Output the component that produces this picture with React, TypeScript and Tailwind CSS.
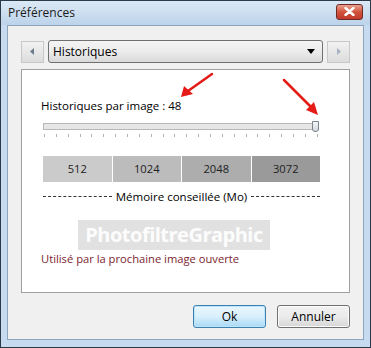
import React from 'react'

const font = {fontFamily: '"Open Sans", "Noto Sans", sans-serif'}

const ticks = Array.from({length: 24}, (_, i) => i)

const sizes = [
	{label: '512', bg: 'bg-[#cbcbcb]'},
	{label: '1024', bg: 'bg-[#bcbcbc]'},
	{label: '2048', bg: 'bg-[#adadad]'},
	{label: '3072', bg: 'bg-[#9a9a9a]'},
]

const ArrowBtn = ({dir}: {dir: 'left' | 'right'}) => (
	<div className='w-[23px] h-[22px] flex items-center justify-center border border-[#c8c8c8] bg-gradient-to-b from-[#f2f2f2] to-[#dcdcdc]'>
		<svg width='5' height='7' viewBox='0 0 5 7'>
			{dir === 'left' ? (
				<polygon points='4,0 4,7 0,3.5' fill='#6c7a8c' />
			) : (
				<polygon points='1,0 1,7 5,3.5' fill='#a8b4c4' />
			)}
		</svg>
	</div>
)

export default function App() {
	return (
		<div
			className='relative w-[371px] h-[348px] bg-[#c6dbef] border border-[#2c3a48] overflow-hidden text-[11.2px] text-black'
			style={font}
		>
			{/* title bar */}
			<div className='h-[24px] flex items-center justify-between pl-[7px] pr-[7px] bg-gradient-to-b from-[#dce9f5] to-[#bcd3ea]'>
				<span className='text-[12px] text-[#1a1a1a]'>Préférences</span>
				<div className='w-[27px] h-[16px] mt-[-3px] rounded-[3px] border border-[#6d2a26] bg-gradient-to-b from-[#e9a08f] via-[#d2533c] to-[#c0392b] flex items-center justify-center'>
					<svg width='11' height='9' viewBox='0 0 11 9'>
						<path d='M1.5 1 L9.5 8 M9.5 1 L1.5 8' stroke='#fff' strokeWidth='2.4' strokeLinecap='round' />
					</svg>
				</div>
			</div>

			{/* client area */}
			<div className='mx-[6px] h-[315px] border border-[#8ea4bb] bg-[#f0f0f0] flex flex-col px-[13px] pt-[14px]'>
				<div className='flex items-center gap-[4px] h-[23px]'>
					<ArrowBtn dir='left' />
					<div className='flex-1 h-[23px] rounded-[3px] border border-[#707070] bg-gradient-to-b from-[#f4f4f4] via-[#ececec] to-[#d9d9d9] flex items-center justify-between pl-[4px] pr-[7px]'>
						<span className='text-[12px]'>Historiques</span>
						<svg width='8' height='5' viewBox='0 0 8 5'>
							<polygon points='0,0 8,0 4,5' fill='#000' />
						</svg>
					</div>
					<ArrowBtn dir='right' />
				</div>

				<div className='relative mt-[6px] h-[224px] border border-[#a0a0a0] bg-white px-[19px] pt-[28px]'>
					<div className='leading-[16px] text-[11.5px]'>Historiques par image : 48</div>

					<div className='relative mt-[9px] ml-[2px] w-[276px] h-[7px] border border-[#b8b8b8] bg-[#e6e6e6]'>
						<div className='absolute right-[-1px] top-[-3px] w-[7px] h-[11px] rounded-b-[3px] border border-[#7a8590] bg-gradient-to-b from-[#f8f8f8] to-[#d0d6dc]' />
					</div>
					<div className='mt-[4px] ml-[2px] w-[276px] flex justify-between px-[1px]'>
						{ticks.map(t => (
							<div key={t} className='w-px h-[3px] bg-[#b0b0b0]' />
						))}
					</div>

					<div className='mt-[19px] ml-[2px] w-[277px] h-[26px] flex'>
						{sizes.map(s => (
							<div
								key={s.label}
								className={`flex-1 flex items-center justify-center border-r border-white last:border-r-0 ${s.bg} text-[#222]`}
							>
								{s.label}
							</div>
						))}
					</div>

					<div className='mt-[6px] ml-[2px] w-[277px] flex items-center gap-[4px]'>
						<div className='flex-1 border-t border-dashed border-[#333]' />
						<span className='text-[11.5px]'>Mémoire conseillée (Mo)</span>
						<div className='flex-1 border-t border-dashed border-[#333]' />
					</div>

					<div className='mt-[46px] text-[#7b1e2e]'>Utilisé par la prochaine image ouverte</div>

					{/* watermark */}
					<div className='absolute left-[56px] top-[150px] w-[192px] h-[30px] bg-[#d4d4d4]/70 flex items-center justify-center'>
						<span className='text-[20px] font-bold text-white/90 tracking-tight'>PhotofiltreGraphic</span>
					</div>

					{/* annotation arrows */}
					<svg className='absolute left-0 top-0' width='330' height='80' viewBox='0 0 330 80'>
						<line x1='190' y1='4' x2='166' y2='21' stroke='#e41b17' strokeWidth='2.5' strokeLinecap='round' />
						<polygon points='159,27 162,16 171,24' fill='#e41b17' />
						<line x1='262' y1='10' x2='289' y2='37' stroke='#e41b17' strokeWidth='2.5' strokeLinecap='round' />
						<polygon points='296,45 284,40 292,32' fill='#e41b17' />
					</svg>
				</div>

				<div className='mt-[12px] flex justify-end gap-[11px]'>
					<button className='w-[73px] h-[23px] rounded-[3px] border border-[#3c7fb1] bg-gradient-to-b from-[#eaf6fd] via-[#d9f0fc] to-[#a7d9f5] shadow-[inset_0_0_0_1px_#bde6fd] text-[12px]'>
						Ok
					</button>
					<button className='w-[73px] h-[23px] rounded-[3px] border border-[#707070] bg-gradient-to-b from-[#f2f2f2] via-[#ebebeb] to-[#d6d6d6] shadow-[inset_0_0_0_1px_#fcfcfc] text-[12px]'>
						Annuler
					</button>
				</div>
			</div>
		</div>
	)
}
